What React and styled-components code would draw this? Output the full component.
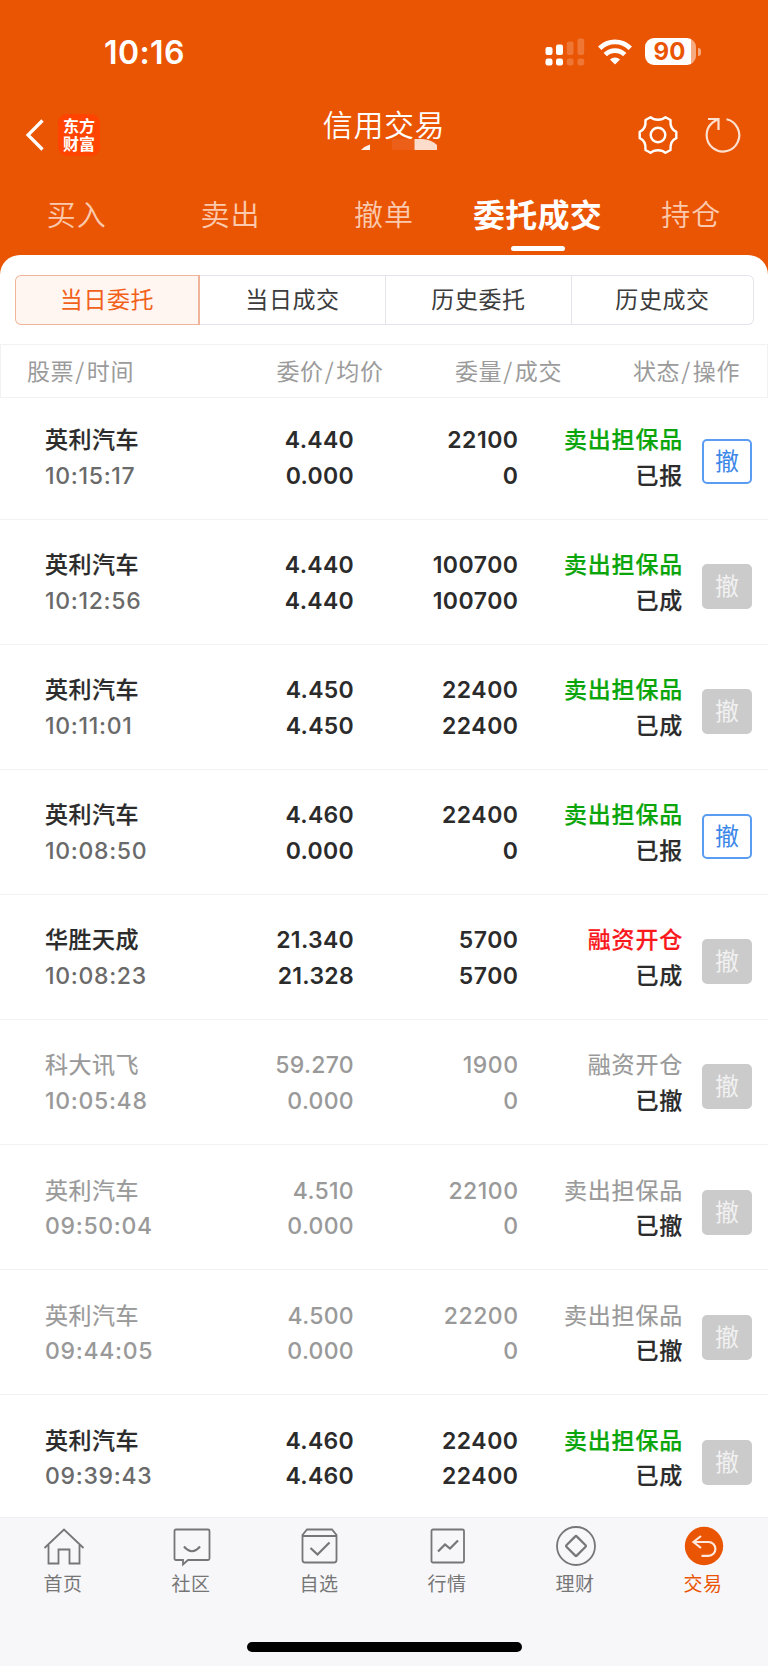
import React from 'react'
import styled, { createGlobalStyle } from 'styled-components'

const ORANGE = '#ea5504'

const GlobalStyle = createGlobalStyle`
    * {
        box-sizing: border-box;
    }
    body {
        margin: 0;
        background: #fff;
        font-family: Inter, "Noto Sans CJK SC", sans-serif;
    }
    button {
        font-family: inherit;
        padding: 0;
        cursor: pointer;
    }
`

const Screen = styled.div`
    width: 768px;
    height: 1666px;
    display: flex;
    flex-direction: column;
    overflow: hidden;
    background: ${ORANGE};
`

const StatusBar = styled.div`
    height: 104px;
    padding: 0 67px 0 104px;
    display: flex;
    align-items: center;
    justify-content: space-between;
    color: #fff;
`

const Clock = styled.span`
    padding-top: 2px;
    font-size: 32px;
    font-weight: 600;
    line-height: 40px;
    letter-spacing: 0.4px;
`

const StatusIcons = styled.div`
    display: flex;
    align-items: center;
    gap: 13px;
    padding-bottom: 1px;
`

const Battery = styled.div`
    display: flex;
    align-items: center;
    gap: 2px;
`

const BatteryBody = styled.div`
    width: 51px;
    height: 27px;
    padding-right: 2px;
    border-radius: 9px;
    background: linear-gradient(90deg, #fff 46px, #f5aa82 46px);
    color: ${ORANGE};
    font-size: 24px;
    font-weight: 700;
    line-height: 27px;
    text-align: center;
`

const BatteryTip = styled.div`
    width: 3px;
    height: 8px;
    border-radius: 0 4px 4px 0;
    background: #f5aa82;
`

const NavBar = styled.div`
    height: 64px;
    display: grid;
    grid-template-columns: 250px 1fr 250px;
    color: #fff;
`

const NavLeft = styled.div`
    display: flex;
    align-items: center;
    gap: 14px;
    padding: 0 0 2px 25px;
`

const NavRight = styled.div`
    display: flex;
    align-items: center;
    justify-content: flex-end;
    gap: 26px;
    padding: 0 27px 2px 0;
`

const Logo = styled.div`
    width: 42px;
    height: 42px;
    padding-top: 3px;
    border-radius: 9px;
    background: #ff4300;
    font-family: "Noto Sans CJK SC", sans-serif;
    font-size: 16px;
    font-weight: 700;
    line-height: 17.5px;
    text-align: center;
`

const TitleBox = styled.div`
    display: flex;
    flex-direction: column;
    align-items: center;
`

const Title = styled.h1`
    margin: 3px 0 0;
    font-size: 30px;
    font-weight: 350;
    line-height: 36px;
    letter-spacing: 0.6px;
    height: 32px;
`

const MaskedRow = styled.div`
    padding-left: 30px;
    line-height: 0;
`

const Tabs = styled.nav`
    height: 87px;
    display: flex;
`

const Tab = styled.div`
    flex: 1;
    display: flex;
    flex-direction: column;
    align-items: center;
    padding-top: 27px;
    color: ${props => props.$active ? '#fff' : '#fbc9ad'};
    font-size: ${props => props.$active ? '32px' : '29px'};
    font-weight: ${props => props.$active ? 700 : 350};
    line-height: 42px;
    letter-spacing: ${props => props.$active ? '0.3px' : '1px'};
    white-space: nowrap;
`

const Underline = styled.div`
    width: 54px;
    height: 5px;
    margin-top: 9px;
    border-radius: 3px;
    background: #fff;
`

const Panel = styled.main`
    height: 1262px;
    padding-top: 20px;
    border-radius: 20px 20px 0 0;
    background: #fff;
    overflow: hidden;
`

const Segments = styled.div`
    display: grid;
    grid-template-columns: 185px 186px 186px 1fr;
    height: 50px;
    margin: 0 14px 0 15px;
`

const Segment = styled.button`
    border: 1px solid ${props => props.$active ? '#f0b598' : '#e4e4ea'};
    border-left-width: ${props => props.$active ? '1px' : '0'};
    border-right-width: ${props => props.$active ? '2px' : '1px'};
    background: ${props => props.$active ? '#fff5f1' : '#fff'};
    color: ${props => props.$active ? '#f2611a' : '#3c3c3c'};
    font-size: 23px;
    line-height: 48px;
    letter-spacing: 0.6px;
    &:first-child {
        border-radius: 6px 0 0 6px;
    }
    &:last-child {
        border-radius: 0 6px 6px 0;
    }
`

const TableHead = styled.div`
    height: 54px;
    margin-top: 19px;
    padding: 0 27px 0 26px;
    border: 1px solid #f2f2f3;
    display: grid;
    grid-template-columns: 178px 178.500px 178.500px 1fr;
    color: #9b9b9b;
    font-family: "Noto Sans CJK SC", sans-serif;
    font-size: 23px;
    line-height: 51px;
    letter-spacing: 0.6px;
    span {
        text-align: right;
        white-space: nowrap;
    }
    span:first-child {
        text-align: left;
    }
    i {
        font-style: normal;
        margin: 0 2px 0 1px;
    }
`

const Row = styled.div`
    height: 125.1px;
    padding: 28.6px 0 0 45px;
    border-bottom: 1px solid #f2f2f4;
    display: grid;
    grid-template-columns: 152px 157px 164.500px 165.500px 50px;
    align-items: start;
    color: ${props => props.$muted ? '#999' : '#2b2b2b'};
    font-size: 23px;
    font-weight: ${props => props.$muted ? 500 : 600};
    line-height: 35.7px;
    letter-spacing: 0.5px;
    white-space: nowrap;
    &:first-child {
        height: 121.5px;
        padding-top: 25px;
    }
`

const Cell = styled.div`
    text-align: ${props => props.$left ? 'left' : 'right'};
`

const Price = styled(Cell)`
    letter-spacing: 0.3px;
`

const Name = styled.div`
    font-weight: ${props => props.$muted ? 400 : 500};
    -webkit-text-stroke: 0.2px;
`

const Time = styled.div`
    color: ${props => props.$muted ? '#999' : '#6a6a6a'};
    font-weight: 500;
    letter-spacing: 0.7px;
`

const Kind = styled.div`
    padding-right: 1px;
    color: ${props => props.$color};
    font-weight: ${props => props.$muted ? 400 : 500};
    letter-spacing: 0.8px;
    -webkit-text-stroke: 0.2px;
`

const State = styled.div`
    padding-right: 1px;
    color: #2b2b2b;
    font-weight: 500;
    letter-spacing: 0.8px;
    -webkit-text-stroke: 0.2px;
`

const CancelButton = styled.button`
    width: 50px;
    height: 45px;
    margin: 16px 0 0 18px;
    border: 2px solid ${props => props.$enabled ? '#5a9cf2' : '#cbcbcb'};
    border-radius: 5px;
    background: ${props => props.$enabled ? '#fff' : '#cbcbcb'};
    color: ${props => props.$enabled ? '#3d87e8' : '#f1f1f1'};
    font-size: 24px;
    line-height: 41px;
`

const BottomBar = styled.footer`
    flex: 1;
    border-top: 1px solid #eeeef0;
    background: #f7f7fa;
`

const BottomTabs = styled.div`
    display: flex;
    height: 124px;
    padding-top: 7px;
`

const BottomTab = styled.div`
    flex: 1;
    display: flex;
    flex-direction: column;
    align-items: center;
    color: ${props => props.$active ? ORANGE : '#767676'};
    font-size: 19px;
    line-height: 28px;
    svg {
        display: block;
        margin-bottom: 4px;
    }
    span {
        padding-right: 2px;
        letter-spacing: 0.6px;
    }
`

const HomeIndicator = styled.div`
    width: 275px;
    height: 10px;
    margin: 0 auto;
    border-radius: 5px;
    background: #000;
`

const segments = ['当日委托', '当日成交', '历史委托', '历史成交']

const heads = [['股票', '时间'], ['委价', '均价'], ['委量', '成交'], ['状态', '操作']]

const SELL = '卖出担保品'
const BUY = '融资开仓'

const orders = [
    { name: '英利汽车', time: '10:15:17', price: '4.440', avg: '0.000', qty: '22100', done: '0', kind: SELL, state: '已报' },
    { name: '英利汽车', time: '10:12:56', price: '4.440', avg: '4.440', qty: '100700', done: '100700', kind: SELL, state: '已成' },
    { name: '英利汽车', time: '10:11:01', price: '4.450', avg: '4.450', qty: '22400', done: '22400', kind: SELL, state: '已成' },
    { name: '英利汽车', time: '10:08:50', price: '4.460', avg: '0.000', qty: '22400', done: '0', kind: SELL, state: '已报' },
    { name: '华胜天成', time: '10:08:23', price: '21.340', avg: '21.328', qty: '5700', done: '5700', kind: BUY, state: '已成' },
    { name: '科大讯飞', time: '10:05:48', price: '59.270', avg: '0.000', qty: '1900', done: '0', kind: BUY, state: '已撤' },
    { name: '英利汽车', time: '09:50:04', price: '4.510', avg: '0.000', qty: '22100', done: '0', kind: SELL, state: '已撤' },
    { name: '英利汽车', time: '09:44:05', price: '4.500', avg: '0.000', qty: '22200', done: '0', kind: SELL, state: '已撤' },
    { name: '英利汽车', time: '09:39:43', price: '4.460', avg: '4.460', qty: '22400', done: '22400', kind: SELL, state: '已成' },
]

const kindColor = (order) => {
    if (order.state === '已撤') return '#999'
    return order.kind === SELL ? '#0aa50a' : '#f9191c'
}

const SignalIcon = () => (
    <svg width="40" height="28" viewBox="0 0 40 28" fill="#fff">
        <rect x="0.5" y="9" width="7" height="8" rx="2" />
        <rect x="11" y="6.5" width="7" height="10.5" rx="2" />
        <rect x="21.8" y="3.5" width="6.7" height="13.5" rx="2" opacity="0.2" />
        <rect x="32.5" y="0.5" width="6.7" height="16.5" rx="2" opacity="0.2" />
        <rect x="0.5" y="20.5" width="7" height="7" rx="2.2" />
        <rect x="11" y="20.5" width="7" height="7" rx="2.2" />
        <rect x="21.8" y="20.5" width="6.7" height="7" rx="2.2" opacity="0.2" />
        <rect x="32.5" y="20.5" width="6.7" height="7" rx="2.2" opacity="0.2" />
    </svg>
)

const WifiIcon = () => (
    <svg width="34" height="26" viewBox="0 0 34 26" fill="none" stroke="#fff" strokeWidth="4.8">
        <path d="M1.7 9.3a21.6 21.6 0 0 1 30.6 0" />
        <path d="M7.3 15.6a13.7 13.7 0 0 1 19.4 0" />
        <path d="M17 25.6l-5-5a7 7 0 0 1 10 0z" fill="#fff" stroke="none" />
    </svg>
)

const BackIcon = () => (
    <svg width="19" height="32" viewBox="0 0 19 32" fill="none" stroke="#fff" strokeWidth="3.2">
        <path d="M17.5 1.5L3 16l14.5 14.5" />
    </svg>
)

const GearIcon = () => (
    <svg width="42" height="40" viewBox="0 0 42 40" fill="none" stroke="#fff" strokeWidth="2.4" strokeLinejoin="round">
        <path d="M13.5 2.2C16 4.5 18.5 4.8 21 4.8S26 4.5 28.5 2.2L33.5 5C33 11.5 35 15 39.3 16.8V23.2C35 25 33 28.5 33.5 35L28.5 37.8C26 35.5 23.5 35.2 21 35.2S16 35.5 13.5 37.8L8.5 35C9 28.5 7 25 2.7 23.2V16.8C7 15 9 11.5 8.5 5Z" />
        <circle cx="21" cy="20" r="7.3" />
    </svg>
)

const RefreshIcon = () => (
    <svg width="36" height="38" viewBox="0 0 36 38" fill="none" stroke="#fde0d0" strokeWidth="2.2">
        <path d="M21.5 3.3A16.3 16.3 0 1 1 7.5 6.7L13 3" />
        <path d="M3 3H13.5V14" />
    </svg>
)

// leftovers of the masked account number under the title
const MaskedAccount = () => (
    <svg width="76" height="12" viewBox="0 0 76 12">
        <path d="M0 11Q4 7 9 5.5V11Z" fill="#fff3ec" />
        <rect x="31" y="0" width="22.5" height="11" fill="#eb5f18" />
        <path d="M53.5 0H62Q71 1 76 6V11H53.5Z" fill="#fcdccb" />
    </svg>
)

const bottomItems = [
    { label: '首页', icon: <path d="M1.5 21L21 2.5L40.5 21M5.5 18V36.5H15.5V22.5H26.5V36.5H36.5V18" /> },
    { label: '社区', icon: <><path d="M5 2.5H37Q38.5 2.5 38.5 4V31.5Q38.5 33 37 33H17L12 37.5V33H5Q3.5 33 3.5 31.5V4Q3.5 2.5 5 2.5Z" /><path d="M13 19.5Q21 29 29 19.5" strokeWidth="2.2" /></> },
    { label: '自选', icon: <><path d="M8 2.5H33L37.5 8V33Q37.5 35.5 35 35.5H6Q3.5 35.5 3.5 33V8Z" /><path d="M3.5 9H37.5" /><path d="M11.5 21L18.5 27.5L30.5 15.5" strokeWidth="2.2" /></> },
    { label: '行情', icon: <><rect x="4.5" y="2.5" width="32.5" height="33" rx="1.5" /><path d="M11 24.5L18 17.5L23 21.5L31 13.5" strokeWidth="2.2" /></> },
    { label: '理财', icon: <><circle cx="21" cy="19" r="19" /><rect x="13.7" y="11.7" width="14.6" height="14.6" rx="1" transform="rotate(45 21 19)" strokeWidth="2.2" /></> },
    { label: '交易', active: true, icon: <><circle cx="21" cy="19" r="19.2" fill={ORANGE} stroke="none" /><path d="M18 9L10.5 15L18 21M10.5 15H25.5A6.8 6.8 0 0 1 25.5 28.8H18.5" stroke="#ffe9de" strokeWidth="2.2" /></> },
]

const OrderRow = ({ order }) => {
    const muted = order.state === '已撤'

    return (
        <Row $muted={muted}>
            <Cell $left>
                <Name $muted={muted}>{order.name}</Name>
                <Time $muted={muted}>{order.time}</Time>
            </Cell>
            <Price>
                <div>{order.price}</div>
                <div>{order.avg}</div>
            </Price>
            <Cell>
                <div>{order.qty}</div>
                <div>{order.done}</div>
            </Cell>
            <Cell>
                <Kind $color={kindColor(order)} $muted={muted}>{order.kind}</Kind>
                <State>{order.state}</State>
            </Cell>
            <CancelButton $enabled={order.state === '已报'}>撤</CancelButton>
        </Row>
    )
}

const App = () => {
    return (
        <>
            <GlobalStyle />
            <Screen>
                <StatusBar>
                    <Clock>10:16</Clock>
                    <StatusIcons>
                        <SignalIcon />
                        <WifiIcon />
                        <Battery>
                            <BatteryBody>90</BatteryBody>
                            <BatteryTip />
                        </Battery>
                    </StatusIcons>
                </StatusBar>
                <NavBar>
                    <NavLeft>
                        <BackIcon />
                        <Logo>东方<br />财富</Logo>
                    </NavLeft>
                    <TitleBox>
                        <Title>信用交易</Title>
                        <MaskedRow>
                            <MaskedAccount />
                        </MaskedRow>
                    </TitleBox>
                    <NavRight>
                        <GearIcon />
                        <RefreshIcon />
                    </NavRight>
                </NavBar>
                <Tabs>
                    <Tab>买入</Tab>
                    <Tab>卖出</Tab>
                    <Tab>撤单</Tab>
                    <Tab $active>委托成交<Underline /></Tab>
                    <Tab>持仓</Tab>
                </Tabs>
                <Panel>
                    <Segments>
                        {segments.map((label, i) => <Segment key={label} $active={i === 0}>{label}</Segment>)}
                    </Segments>
                    <TableHead>
                        {heads.map(([a, b]) => <span key={a}>{a}<i>/</i>{b}</span>)}
                    </TableHead>
                    <div>
                        {orders.map(order => <OrderRow key={order.time} order={order} />)}
                    </div>
                </Panel>
                <BottomBar>
                    <BottomTabs>
                        {bottomItems.map(item => (
                            <BottomTab key={item.label} $active={item.active}>
                                <svg width="42" height="42" viewBox="0 -2 42 42" fill="none" stroke="currentColor" strokeWidth="1.8">{item.icon}</svg>
                                <span>{item.label}</span>
                            </BottomTab>
                        ))}
                    </BottomTabs>
                    <HomeIndicator />
                </BottomBar>
            </Screen>
        </>
    )
}

export default App
